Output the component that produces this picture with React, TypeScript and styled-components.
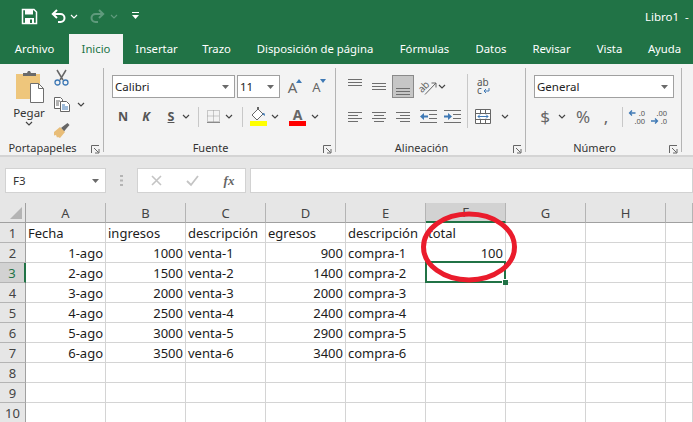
import styled, { createGlobalStyle } from 'styled-components';

const GREEN = '#217346';
const ICON_BLUE = '#3f79b5';
const UI_FONT = '"Noto Sans", "Open Sans", sans-serif';

const COLUMNS = ['A', 'B', 'C', 'D', 'E', 'F', 'G', 'H', ''];
const TABS = [
  { label: 'Archivo', width: 69 },
  { label: 'Inicio', width: 54 },
  { label: 'Insertar', width: 67 },
  { label: 'Trazo', width: 53 },
  { label: 'Disposición de página', width: 144 },
  { label: 'Fórmulas', width: 75 },
  { label: 'Datos', width: 58 },
  { label: 'Revisar', width: 63 },
  { label: 'Vista', width: 53 },
  { label: 'Ayuda', width: 57 },
];

type Cell = { text: string; right?: boolean };
const num = (text: string): Cell => ({ text, right: true });
const txt = (text: string): Cell => ({ text });

const ROWS: Cell[][] = [
  [txt('Fecha'), txt('ingresos'), txt('descripción'), txt('egresos'), txt('descripción'), txt('total')],
  [num('1-ago'), num('1000'), txt('venta-1'), num('900'), txt('compra-1'), num('100')],
  [num('2-ago'), num('1500'), txt('venta-2'), num('1400'), txt('compra-2')],
  [num('3-ago'), num('2000'), txt('venta-3'), num('2000'), txt('compra-3')],
  [num('4-ago'), num('2500'), txt('venta-4'), num('2400'), txt('compra-4')],
  [num('5-ago'), num('3000'), txt('venta-5'), num('2900'), txt('compra-5')],
  [num('6-ago'), num('3500'), txt('venta-6'), num('3400'), txt('compra-6')],
  [],
  [],
  [],
];

const GlobalStyle = createGlobalStyle`
  html, body {
    margin: 0;
    padding: 0;
    background: #fff;
  }
  svg {
    overflow: visible;
  }
`;

const Window = styled.div`
  width: 693px;
  height: 422px;
  overflow: hidden;
  font-family: ${UI_FONT};
  background: #fff;
`;

const TitleBar = styled.div`
  height: 32px;
  background: ${GREEN};
  display: flex;
  align-items: center;
  padding-left: 20px;
`;

const Slot = styled.div<{ $w: number; $ml?: number; $top?: number }>`
  width: ${(p) => p.$w}px;
  margin-left: ${(p) => p.$ml ?? 0}px;
  margin-top: ${(p) => p.$top ?? 0}px;
  flex: none;
  display: flex;
  align-items: center;
  justify-content: center;
`;

const DocTitle = styled.div`
  margin-left: 505px;
  color: #fff;
  font-size: 11.5px;
  white-space: nowrap;
  word-spacing: 3px;
`;

const TabBar = styled.div`
  height: 32px;
  background: ${GREEN};
  display: flex;
  align-items: flex-end;
`;

const Tab = styled.div<{ $active?: boolean; $w: number }>`
  width: ${(p) => p.$w}px;
  height: 30px;
  flex: none;
  line-height: 30px;
  text-align: center;
  font-size: 11.3px;
  white-space: nowrap;
  color: ${(p) => (p.$active ? GREEN : '#fff')};
  background: ${(p) => (p.$active ? '#f3f3f3' : 'transparent')};
`;

const Ribbon = styled.div`
  height: 93px;
  box-sizing: border-box;
  padding-top: 4px;
  background: #f3f3f3;
  border-bottom: 2px solid #d4d4d4;
  display: flex;
  color: #444;
`;

const Group = styled.section<{ $w: number }>`
  width: ${(p) => p.$w}px;
  height: 84px;
  flex: none;
  box-sizing: border-box;
  border-right: 1px solid #b4b4b4;
  display: flex;
  flex-direction: column;
`;

const GroupBody = styled.div<{ $pl: number }>`
  flex: 1;
  min-height: 0;
  padding-left: ${(p) => p.$pl}px;
  display: flex;
`;

const GroupStack = styled.div`
  padding-top: 7px;
  display: flex;
  flex-direction: column;
  gap: 7px;
`;

const ToolRow = styled.div`
  height: 23px;
  display: flex;
  align-items: center;
`;

const GroupFooter = styled.div`
  height: 12px;
  line-height: 16px;
  padding-right: 3px;
  display: grid;
  grid-template-columns: 1fr auto 1fr 15px;
  font-size: 11px;
  color: #333;
`;

const GroupLabel = styled.span`
  grid-column: 2;
  white-space: nowrap;
`;

const LauncherSlot = styled.span`
  grid-column: 4;
  justify-self: end;
  display: flex;
  padding-top: 5px;
  height: 8px;
`;

const PasteColumn = styled.div`
  width: 34px;
  margin-left: 7px;
  padding-top: 2px;
  display: flex;
  flex-direction: column;
  align-items: center;
  font-size: 11.5px;
  color: #333;
`;

const PasteLabel = styled.div`
  margin-top: 1px;
  line-height: 17px;
`;

const ClipTools = styled.div`
  margin-left: 7px;
  padding-top: 2px;
  display: flex;
  flex-direction: column;
  gap: 7px;
`;

const Combo = styled.div<{ $w: number; $ml?: number }>`
  width: ${(p) => p.$w}px;
  height: 23px;
  margin-left: ${(p) => p.$ml ?? 0}px;
  box-sizing: border-box;
  flex: none;
  background: #fff;
  border: 1px solid #a0a0a0;
  padding: 0 5px 0 2px;
  display: flex;
  align-items: center;
  justify-content: space-between;
  font-size: 11.5px;
  color: #222;
`;

const StyleLetter = styled.span<{ $italic?: boolean; $under?: boolean }>`
  font-weight: 700;
  font-size: 12.5px;
  color: #555;
  font-style: ${(p) => (p.$italic ? 'italic' : 'normal')};
  text-decoration: ${(p) => (p.$under ? 'underline' : 'none')};
`;

const BigLetter = styled.span<{ $size: number }>`
  font-size: ${(p) => p.$size}px;
  color: #666;
`;

const GrowMark = styled.span`
  display: flex;
  margin: -11px 0 0 -1px;
`;

const Divider = styled.div<{ $ml: number }>`
  width: 1px;
  height: 20px;
  margin-left: ${(p) => p.$ml}px;
  flex: none;
  background: #c8c8c8;
`;

const ActiveBox = styled.div`
  width: 22px;
  height: 23px;
  box-sizing: border-box;
  flex: none;
  background: #c6c6c6;
  border: 1px solid #8a8a8a;
  display: flex;
  align-items: flex-end;
  justify-content: center;
  padding-bottom: 2px;
  margin-left: 5px;
`;

const AlignSplit = styled.div`
  display: flex;
`;

const WrapDivider = styled.div`
  width: 1px;
  height: 54px;
  margin: 6px 0 0 6px;
  background: #c8c8c8;
`;

const FormulaBar = styled.div`
  height: 46px;
  box-sizing: border-box;
  padding: 11px 0 0 5px;
  background: #e6e6e6;
  display: flex;
`;

const NameBox = styled.div`
  width: 101px;
  height: 25px;
  box-sizing: border-box;
  flex: none;
  background: #fff;
  border: 1px solid #d2d2d2;
  padding: 0 6px 0 7px;
  display: flex;
  align-items: center;
  justify-content: space-between;
  font-size: 11.5px;
  color: #333;
`;

const Grip = styled.div`
  width: 31px;
  height: 25px;
  flex: none;
  display: flex;
  align-items: center;
  justify-content: center;
`;

const FxBox = styled.div`
  width: 109px;
  height: 25px;
  box-sizing: border-box;
  flex: none;
  background: #fff;
  border: 1px solid #d2d2d2;
  display: flex;
  align-items: center;
`;

const FxGlyph = styled.span`
  font-family: "Liberation Serif", serif;
  font-style: italic;
  font-weight: 700;
  font-size: 13px;
  color: #666;
`;

const FormulaInput = styled.div`
  flex: 1;
  height: 25px;
  margin-left: 4px;
  box-sizing: border-box;
  background: #fff;
  border: 1px solid #d2d2d2;
`;

const Sheet = styled.div`
  position: relative;
  display: grid;
  grid-template-columns: 26px repeat(8, 80px) 27px;
  grid-auto-rows: 20px;
  font-size: 13px;
  color: #1c1c1c;
`;

const Corner = styled.div`
  background: #e6e6e6;
  border-right: 1px solid #a0a0a0;
  border-bottom: 1px solid #a0a0a0;
  box-sizing: border-box;
  display: flex;
  align-items: flex-end;
  justify-content: flex-end;
  padding: 0 3px 3px 0;
`;

const ColHead = styled.div<{ $selected?: boolean }>`
  box-sizing: border-box;
  background: ${(p) => (p.$selected ? '#d2d2d2' : '#e6e6e6')};
  border-right: 1px solid #b4b4b4;
  border-bottom: ${(p) => (p.$selected ? `2px solid ${GREEN}` : '1px solid #a0a0a0')};
  display: flex;
  align-items: center;
  justify-content: center;
  color: #444;
`;

const RowHead = styled.div<{ $selected?: boolean }>`
  box-sizing: border-box;
  padding-top: 1px;
  background: ${(p) => (p.$selected ? '#d2d2d2' : '#e6e6e6')};
  border-right: ${(p) => (p.$selected ? `2px solid ${GREEN}` : '1px solid #a0a0a0')};
  border-bottom: 1px solid #b4b4b4;
  display: flex;
  align-items: center;
  justify-content: center;
  color: ${(p) => (p.$selected ? GREEN : '#444')};
`;

const RowGroup = styled.div`
  display: contents;
`;

const DataCell = styled.div<{ $right?: boolean }>`
  position: relative;
  box-sizing: border-box;
  border-right: 1px solid #d4d4d4;
  border-bottom: 1px solid #d4d4d4;
  padding: 0 2px;
  line-height: 21px;
  white-space: nowrap;
  text-align: ${(p) => (p.$right ? 'right' : 'left')};
`;

const Selection = styled.div`
  position: absolute;
  left: -1px;
  top: -2px;
  width: 81px;
  height: 22px;
  box-sizing: border-box;
  border: 2px solid ${GREEN};
  z-index: 1;
`;

const FillHandle = styled.div`
  position: absolute;
  right: -4px;
  bottom: -4px;
  width: 5px;
  height: 5px;
  background: ${GREEN};
  border: 1px solid #fff;
  border-width: 1px 0 0 1px;
`;

const Annotation = styled.svg`
  position: absolute;
  left: 421px;
  top: 8px;
  z-index: 2;
`;

const Chevron = ({ color = '#444' }: { color?: string }) => (
  <svg width="8" height="5" viewBox="0 0 8 5">
    <path d="M1 1l3 3 3-3" fill="none" stroke={color} strokeWidth="1.2" />
  </svg>
);

const DropArrow = () => (
  <svg width="7" height="4" viewBox="0 0 7 4">
    <path d="M0 0h7L3.5 4z" fill="#6a6a6a" />
  </svg>
);

const Launcher = () => (
  <svg width="9" height="9" viewBox="0 0 9 9">
    <path d="M.5 8V.5H8M3 3l4.500 4.500M4 8h4V4" fill="none" stroke="#666" strokeWidth="1" />
  </svg>
);

const SaveIcon = () => (
  <svg width="15" height="15" viewBox="0 0 15 15">
    <path d="M.5.5h11.500l2.500 2.500v11.500H.5z" fill="none" stroke="#fff" strokeWidth="1.500" />
    <path d="M3 1h8v4.500H3z" fill="#fff" />
    <path d="M3 9h9v5H3z" fill="#fff" />
    <path d="M8 10.500h2V14H8z" fill={GREEN} />
  </svg>
);

const UndoIcon = ({ flip, color }: { flip?: boolean; color: string }) => (
  <svg width="15" height="14" viewBox="0 0 15 14" style={flip ? { transform: 'scaleX(-1)' } : undefined}>
    <path d="M6 1L1.800 5 6 9M2 5h7.500a3.800 3.800 0 0 1 0 8H7" fill="none" stroke={color} strokeWidth="2" />
  </svg>
);

const CustomizeIcon = () => (
  <svg width="9" height="8" viewBox="0 0 9 8">
    <path d="M1 .5h7" stroke="#fff" strokeWidth="1" />
    <path d="M1 3h7L4.500 7z" fill="#fff" />
  </svg>
);

const PasteIcon = () => (
  <svg width="34" height="33" viewBox="-4 0 34 33">
    <path d="M0 4h24v25H0z" fill="#eec67c" />
    <path d="M7 5V3h4l1-2h2l1 2h5v3H7z" fill="#6a6a6a" />
    <path d="M14.500 13.500h8l5 5v14h-13z" fill="#fff" stroke="#6f6f6f" />
    <path d="M22.500 13.500v5h5" fill="none" stroke="#6f6f6f" />
  </svg>
);

const ScissorsIcon = () => (
  <svg width="15" height="16" viewBox="0 0 15 16">
    <path d="M3 0l6 10M12 0L6 10" stroke="#666" strokeWidth="1.500" fill="none" />
    <circle cx="3.500" cy="12.500" r="2.500" fill="none" stroke={ICON_BLUE} strokeWidth="1.300" />
    <circle cx="11.500" cy="12.500" r="2.500" fill="none" stroke={ICON_BLUE} strokeWidth="1.300" />
  </svg>
);

const CopyIcon = () => (
  <svg width="16" height="15" viewBox="0 0 16 15">
    <path d="M.5.5h6l2 2v9H.5z" fill="#fff" stroke="#666" />
    <path d="M6.500 4.500h6l3 3v7h-9z" fill="#fff" stroke="#666" />
    <path d="M2 4h4M2 6h3M2 8h3" stroke="#666" />
    <path d="M8 8h3M8 10h6M8 12h6" stroke={ICON_BLUE} />
  </svg>
);

const BrushIcon = () => (
  <svg width="17" height="15" viewBox="0 0 17 15">
    <path d="M8 5l2.500-2 4-3 2 2-3.500 4-2 2.500z" fill="#666" />
    <path d="M1 9l6-5 5 5-5 6-2-1-1 .5-1-2.500-2 .5z" fill="#e8bd78" />
  </svg>
);

const GrowIcon = ({ shrink }: { shrink?: boolean }) => (
  <GrowMark>
    <svg width="6" height="4" viewBox="0 0 6 4">
      <path d={shrink ? 'M0 0h6L3 4z' : 'M0 4h6L3 0z'} fill={ICON_BLUE} />
    </svg>
  </GrowMark>
);

const BordersIcon = () => (
  <svg width="13" height="13" viewBox="0 0 13 13">
    <path d="M.5.5h12v11H.5zM6.500.5v11M.5 6h12" fill="none" stroke="#9a9a9a" strokeDasharray="1 1" />
    <path d="M0 12.500h13" stroke="#8a8a8a" />
  </svg>
);

const FillIcon = () => (
  <svg width="17" height="19" viewBox="0 0 17 19">
    <path d="M2 8l6-6 5 5-6 6z" fill="#fff" stroke="#666" />
    <path d="M7 0h2v3H7z" fill="#666" />
    <path d="M12 7c2-2 3-1 3 2-1-1-2-1-3-2z" fill={ICON_BLUE} />
    <path d="M0 14h17v5H0z" fill="#ffff00" />
  </svg>
);

const FontColorIcon = () => (
  <svg width="17" height="19" viewBox="0 0 17 19">
    <text x="8.500" y="13" textAnchor="middle" fontFamily="Noto Sans, sans-serif" fontWeight="700" fontSize="14" fill="#666">A</text>
    <path d="M0 14h17v5H0z" fill="#ff0000" />
  </svg>
);

const Lines = ({ widths, gap = 3, offsets }: { widths: number[]; gap?: number; offsets?: number[] }) => (
  <svg width="15" height={(widths.length - 1) * gap + 1} style={{ display: 'block' }}>
    {widths.map((w, i) => (
      <rect key={i} x={offsets ? offsets[i] : 0} y={i * gap} width={w} height="1" fill="#6e6e6e" />
    ))}
  </svg>
);

const OrientIcon = () => (
  <svg width="18" height="18" viewBox="0 0 18 18">
    <text x="-1" y="12" transform="rotate(-45 5 9)" fontFamily="Noto Sans, sans-serif" fontSize="10" fill="#666">ab</text>
    <path d="M6 16.500L17 5M12.500 5H17v4.500" fill="none" stroke="#666" />
  </svg>
);

const IndentIcon = ({ right }: { right?: boolean }) => (
  <svg width="17" height="13" viewBox="0 0 17 13">
    <path d="M0 .5h17M0 12.500h17M9 4.500h8M9 8.500h8" stroke="#6e6e6e" />
    {right ? (
      <path d="M0 5.500h4V3l4 3.500L4 10V7.500H0z" fill={ICON_BLUE} />
    ) : (
      <path d="M8 5.500H4V3L0 6.500 4 10V7.500h4z" fill={ICON_BLUE} />
    )}
  </svg>
);

const WrapIcon = () => (
  <svg width="15" height="17" viewBox="0 0 15 17">
    <text x="1" y="8" fontFamily="Noto Sans, sans-serif" fontSize="10" fill="#555">ab</text>
    <text x="1" y="16" fontFamily="Noto Sans, sans-serif" fontSize="10" fill="#555">c</text>
    <path d="M13 10v3H8.500M10 11l-2 2 2 2" fill="none" stroke={ICON_BLUE} />
  </svg>
);

const MergeIcon = () => (
  <svg width="16" height="15" viewBox="0 0 16 15">
    <path d="M.5.500h15v14H.5zM.5 4.500h15M.5 10.500h15M5.500.500v4M10.500.500v4M5.500 10.500v4M10.500 10.500v4" fill="#fff" stroke="#666" />
    <path d="M3 7.500h10M5 5.500l-2 2 2 2M11 5.500l2 2-2 2" fill="none" stroke={ICON_BLUE} />
  </svg>
);

const DecimalIcon = ({ more }: { more?: boolean }) => (
  <svg width="17" height="16" viewBox="0 0 17 16">
    <text x="17" y="7" textAnchor="end" fontFamily="Noto Sans, sans-serif" fontSize="7.500" fill="#555">{more ? '.00' : '.0'}</text>
    <text x="17" y="15" textAnchor="end" fontFamily="Noto Sans, sans-serif" fontSize="7.500" fill="#555">{more ? '.0' : '.00'}</text>
    {more ? (
      <path d="M1 12h6M5 9.500l2.500 2.500L5 14.500" fill="none" stroke={ICON_BLUE} strokeWidth="1.300" />
    ) : (
      <path d="M1.500 4h6M4 1.500L1.500 4 4 6.500" fill="none" stroke={ICON_BLUE} strokeWidth="1.300" />
    )}
  </svg>
);

const CrossIcon = () => (
  <svg width="11" height="11" viewBox="0 0 11 11">
    <path d="M1 1l9 9M10 1l-9 9" stroke="#c4c4c4" strokeWidth="1.600" />
  </svg>
);

const CheckIcon = () => (
  <svg width="13" height="11" viewBox="0 0 13 11">
    <path d="M1 6l4 4 7-9" fill="none" stroke="#c4c4c4" strokeWidth="1.800" />
  </svg>
);

const GripIcon = () => (
  <svg width="3" height="11" viewBox="0 0 3 11">
    <path d="M0 0h3v2H0zM0 4.500h3v2H0zM0 9h3v2H0z" fill="#b4b4b4" />
  </svg>
);

const CornerIcon = () => (
  <svg width="12" height="12" viewBox="0 0 12 12">
    <path d="M12 0v12H0z" fill="#b4b4b4" />
  </svg>
);

const Footer = ({ label }: { label: string }) => (
  <GroupFooter>
    <GroupLabel>{label}</GroupLabel>
    <LauncherSlot>
      <Launcher />
    </LauncherSlot>
  </GroupFooter>
);

export default function App() {
  return (
    <Window>
      <GlobalStyle />
      <TitleBar>
        <Slot $w={18}><SaveIcon /></Slot>
        <Slot $w={18} $ml={11}><UndoIcon color="#fff" /></Slot>
        <Slot $w={8} $ml={3}><Chevron color="#fff" /></Slot>
        <Slot $w={18} $ml={10}><UndoIcon flip color="#5f9a7c" /></Slot>
        <Slot $w={8} $ml={4}><Chevron color="#5f9a7c" /></Slot>
        <Slot $w={9} $ml={13}><CustomizeIcon /></Slot>
        <DocTitle>Libro1 -</DocTitle>
      </TitleBar>

      <TabBar>
        {TABS.map((tab) => (
          <Tab key={tab.label} $w={tab.width} $active={tab.label === 'Inicio'}>{tab.label}</Tab>
        ))}
      </TabBar>

      <Ribbon>
        <Group $w={104}>
          <GroupBody $pl={5}>
            <PasteColumn>
              <PasteIcon />
              <PasteLabel>Pegar</PasteLabel>
              <Chevron />
            </PasteColumn>
            <ClipTools>
              <Slot $w={17}><ScissorsIcon /></Slot>
              <ToolRow>
                <Slot $w={17}><CopyIcon /></Slot>
                <Slot $w={8} $ml={7}><Chevron /></Slot>
              </ToolRow>
              <Slot $w={17}><BrushIcon /></Slot>
            </ClipTools>
          </GroupBody>
          <Footer label="Portapapeles" />
        </Group>

        <Group $w={232}>
          <GroupBody $pl={8}>
            <GroupStack>
              <ToolRow>
                <Combo $w={123}>Calibri<DropArrow /></Combo>
                <Combo $w={43} $ml={2}>11<DropArrow /></Combo>
                <Slot $w={16} $ml={7}><BigLetter $size={15}>A</BigLetter><GrowIcon /></Slot>
                <Slot $w={16} $ml={8}><BigLetter $size={13}>A</BigLetter><GrowIcon shrink /></Slot>
              </ToolRow>
              <ToolRow>
                <Slot $w={14} $ml={4}><StyleLetter>N</StyleLetter></Slot>
                <Slot $w={14} $ml={9}><StyleLetter $italic>K</StyleLetter></Slot>
                <Slot $w={14} $ml={11}><StyleLetter $under>S</StyleLetter></Slot>
                <Slot $w={8} $ml={4}><Chevron /></Slot>
                <Divider $ml={8} />
                <Slot $w={13} $ml={8}><BordersIcon /></Slot>
                <Slot $w={8} $ml={5}><Chevron /></Slot>
                <Divider $ml={9} />
                <Slot $w={17} $ml={7}><FillIcon /></Slot>
                <Slot $w={8} $ml={4}><Chevron /></Slot>
                <Slot $w={17} $ml={10}><FontColorIcon /></Slot>
                <Slot $w={8} $ml={5}><Chevron /></Slot>
              </ToolRow>
            </GroupStack>
          </GroupBody>
          <Footer label="Fuente" />
        </Group>

        <Group $w={190}>
          <GroupBody $pl={12}>
            <AlignSplit>
              <GroupStack>
                <ToolRow>
                  <Slot $w={15} $top={-8}><Lines widths={[14, 14, 14]} /></Slot>
                  <Slot $w={15} $ml={9}><Lines widths={[14, 14, 14]} /></Slot>
                  <ActiveBox><Lines widths={[14, 14, 14]} /></ActiveBox>
                  <Slot $w={18} $ml={5}><OrientIcon /></Slot>
                  <Slot $w={8} $ml={1}><Chevron /></Slot>
                </ToolRow>
                <ToolRow>
                  <Slot $w={15}><Lines widths={[14, 10, 14, 10]} /></Slot>
                  <Slot $w={15} $ml={9}><Lines widths={[14, 10, 14, 10]} offsets={[0, 2, 0, 2]} /></Slot>
                  <Slot $w={15} $ml={9}><Lines widths={[14, 10, 14, 10]} offsets={[0, 4, 0, 4]} /></Slot>
                  <Slot $w={17} $ml={9}><IndentIcon /></Slot>
                  <Slot $w={17} $ml={7}><IndentIcon right /></Slot>
                </ToolRow>
              </GroupStack>
              <WrapDivider />
              <GroupStack>
                <ToolRow>
                  <Slot $w={15} $ml={8}><WrapIcon /></Slot>
                </ToolRow>
                <ToolRow>
                  <Slot $w={16} $ml={7}><MergeIcon /></Slot>
                  <Slot $w={8} $ml={10}><Chevron /></Slot>
                </ToolRow>
              </GroupStack>
            </AlignSplit>
          </GroupBody>
          <Footer label="Alineación" />
        </Group>

        <Group $w={156}>
          <GroupBody $pl={8}>
            <GroupStack>
              <ToolRow>
                <Combo $w={140}>General<DropArrow /></Combo>
              </ToolRow>
              <ToolRow>
                <Slot $w={12} $ml={5}><BigLetter $size={17}>$</BigLetter></Slot>
                <Slot $w={8} $ml={7}><Chevron /></Slot>
                <Slot $w={16} $ml={9}><BigLetter $size={17}>%</BigLetter></Slot>
                <Slot $w={8} $ml={11}><BigLetter $size={17}>,</BigLetter></Slot>
                <Divider $ml={12} />
                <Slot $w={17} $ml={5}><DecimalIcon /></Slot>
                <Slot $w={17} $ml={5}><DecimalIcon more /></Slot>
              </ToolRow>
            </GroupStack>
          </GroupBody>
          <Footer label="Número" />
        </Group>
      </Ribbon>

      <FormulaBar>
        <NameBox>F3<DropArrow /></NameBox>
        <Grip><GripIcon /></Grip>
        <FxBox>
          <Slot $w={11} $ml={13}><CrossIcon /></Slot>
          <Slot $w={13} $ml={24}><CheckIcon /></Slot>
          <Slot $w={14} $ml={23}><FxGlyph>fx</FxGlyph></Slot>
        </FxBox>
        <FormulaInput />
      </FormulaBar>

      <Sheet>
        <Corner><CornerIcon /></Corner>
        {COLUMNS.map((col, i) => (
          <ColHead key={i} $selected={col === 'F'}>{col}</ColHead>
        ))}
        {ROWS.map((row, r) => (
          <RowGroup key={r}>
            <RowHead $selected={r === 2}>{r + 1}</RowHead>
            {COLUMNS.map((_, c) => {
              const cell = row[c];
              return (
                <DataCell key={c} $right={cell?.right}>
                  {cell?.text}
                  {r === 2 && c === 5 && (
                    <Selection>
                      <FillHandle />
                    </Selection>
                  )}
                </DataCell>
              );
            })}
          </RowGroup>
        ))}
        <Annotation width="96" height="72" viewBox="0 0 96 72">
          <ellipse cx="48" cy="36" rx="45.500" ry="33" fill="none" stroke="#ea1c2c" strokeWidth="5" />
        </Annotation>
      </Sheet>
    </Window>
  );
}
